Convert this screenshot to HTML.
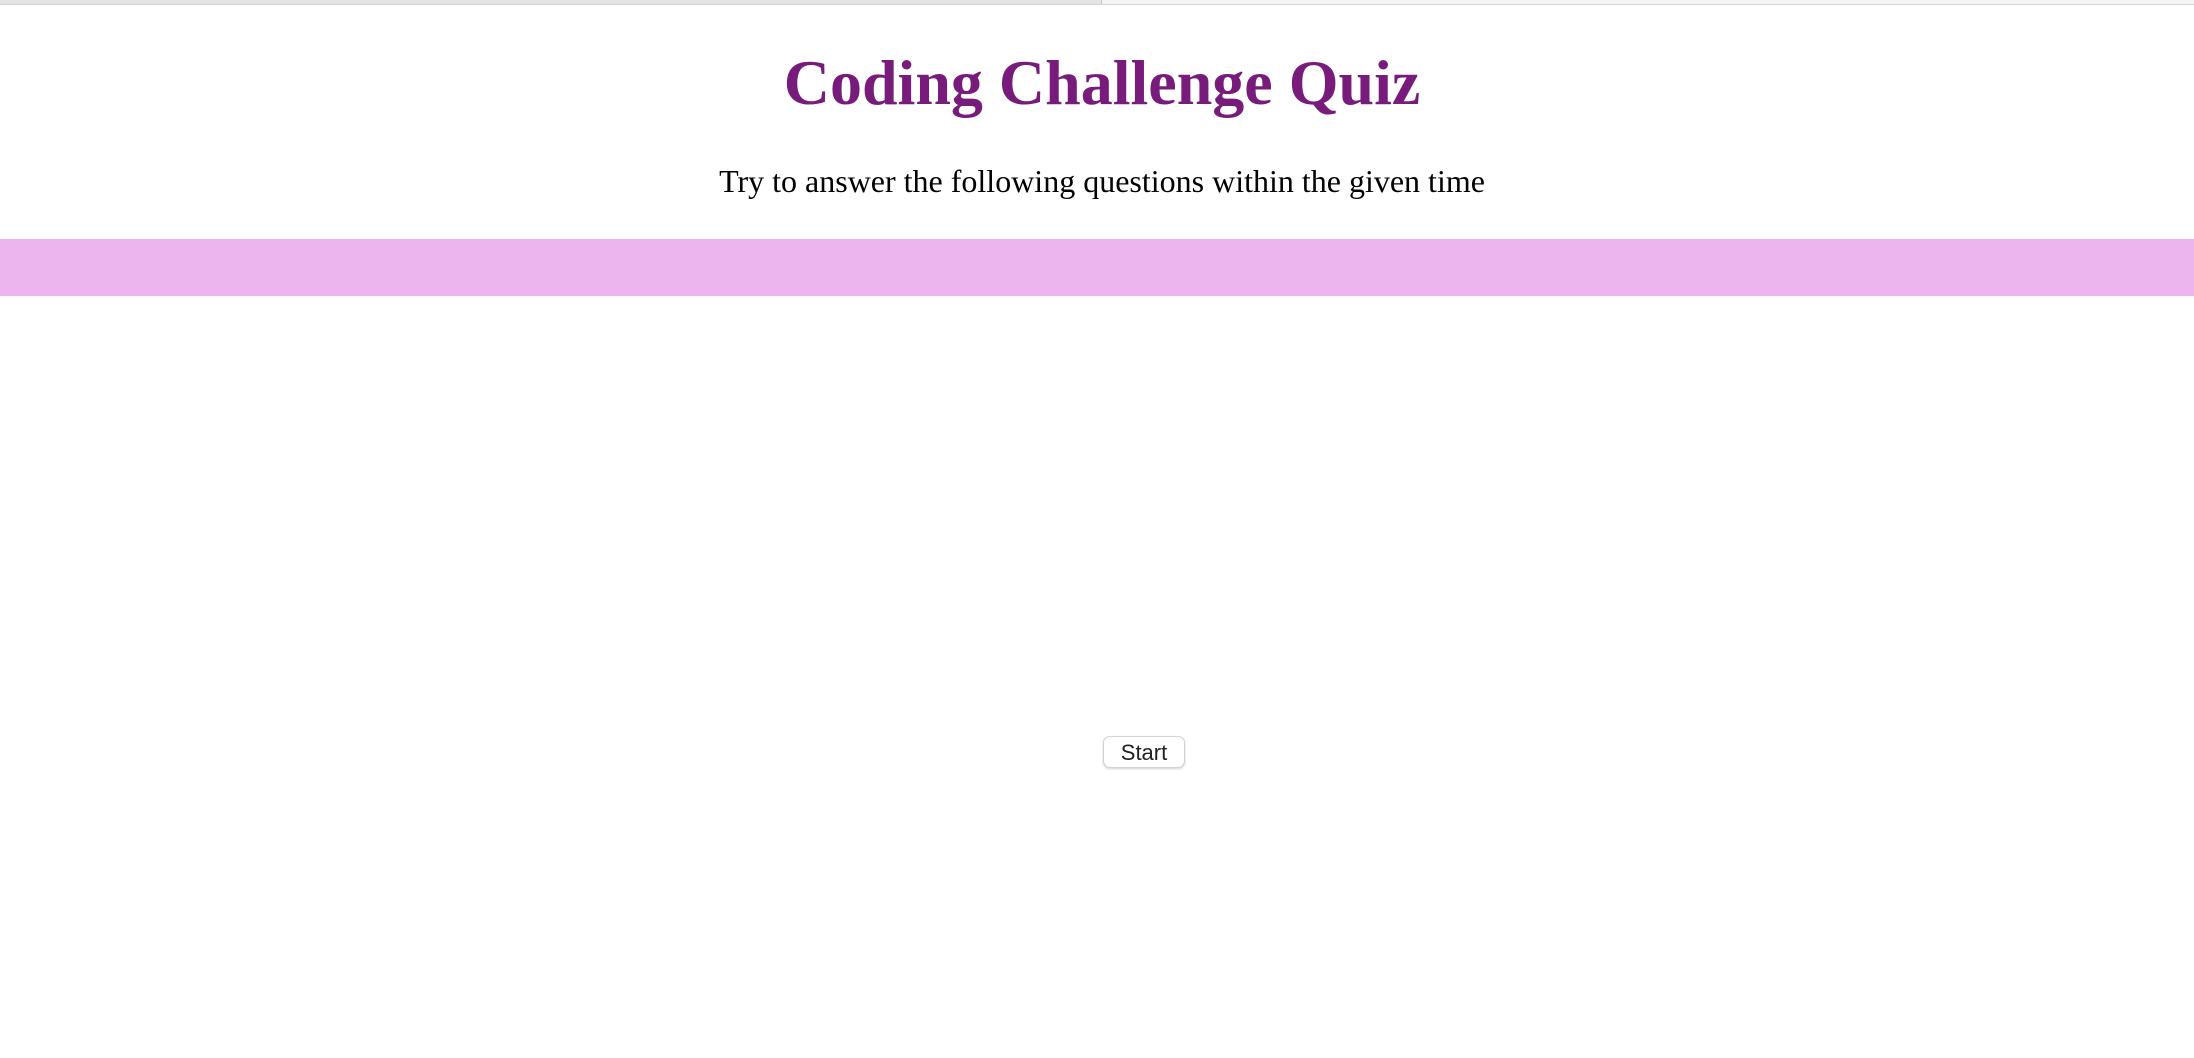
<!DOCTYPE html>
<html>
<head>
<meta charset="utf-8">
<style>
html,body{margin:0;padding:0;background:#fff;width:2194px;height:1058px;overflow:hidden;position:relative;}
.topl{position:absolute;left:0;top:0;width:1101px;height:4px;background:#e4e4e4;}
.topr{position:absolute;left:1102px;top:0;width:1092px;height:4px;background:#f3f3f3;}
.topdiv{position:absolute;left:1101px;top:0;width:1px;height:5px;background:#c8c8c8;}
.topb{position:absolute;left:0;top:4px;width:2194px;height:1px;background:#d4d4d4;}
h1{position:absolute;left:5px;width:2194px;top:51px;margin:0;text-align:center;font-family:"Liberation Serif",serif;font-weight:bold;font-size:64px;line-height:64px;color:#781c7c;}
p{position:absolute;left:5px;width:2194px;top:165px;margin:0;text-align:center;font-family:"Liberation Serif",serif;font-size:32px;line-height:32px;color:#000;}
.band{position:absolute;left:0;top:239px;width:2194px;height:57px;background:#ecb5ee;}
.btn{position:absolute;left:1103px;top:736px;width:80px;height:30px;border:1px solid #d2d2d2;border-radius:7px;background:#fff;box-shadow:0 1px 2px rgba(0,0,0,0.18);font-family:"Liberation Sans",sans-serif;font-size:22px;line-height:32px;text-align:center;color:#222;}
</style>
</head>
<body>
<div class="topl"></div><div class="topr"></div><div class="topdiv"></div><div class="topb"></div>
<h1>Coding Challenge Quiz</h1>
<p>Try to answer the following questions within the given time</p>
<div class="band"></div>
<div class="btn">Start</div>
</body>
</html>
